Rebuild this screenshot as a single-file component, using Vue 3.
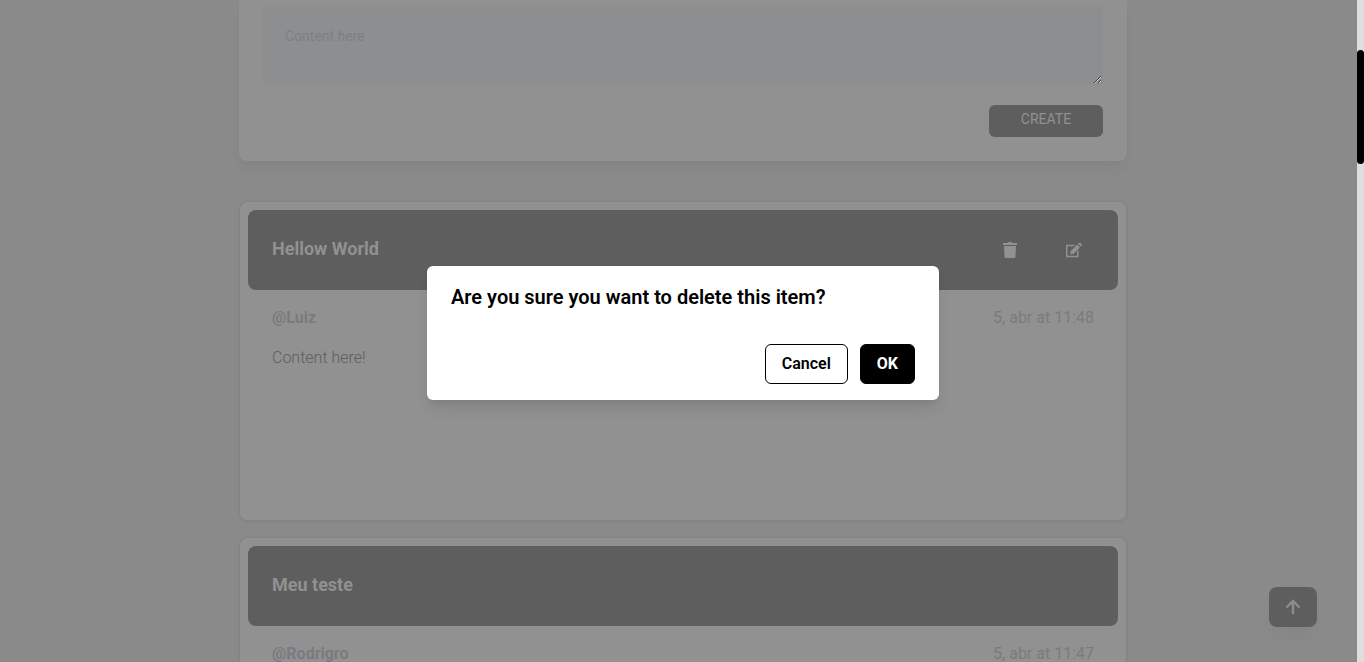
<script setup>
import { ref } from 'vue'

const draft = ref('')
const posts = [
  { id: 1, title: 'Hellow World', author: '@Luiz', date: '5, abr at 11:48', content: 'Content here!', own: true },
  { id: 2, title: 'Meu teste', author: '@Rodrigro', date: '5, abr at 11:47', content: 'Content here!', own: false }
]
</script>

<template>
  <div class="page">
    <main class="feed">
      <form class="composer" @submit.prevent>
        <textarea v-model="draft" class="field" placeholder="Content here" aria-label="Content"></textarea>
        <button class="create" type="submit">CREATE</button>
      </form>

      <section class="posts">
        <article v-for="post in posts" :key="post.id" class="post">
          <header class="post-head">
            <h2>{{ post.title }}</h2>
            <div v-if="post.own" class="actions">
              <button type="button" aria-label="Delete">
                <svg width="20" height="20" viewBox="0 0 20 20" fill="currentColor">
                  <path d="M3 3h4.300l.9-1h3.600l.9 1H17v2H3V3z" />
                  <path d="M4 6h12l-.5 10.700a1.400 1.400 0 0 1-1.400 1.300H5.900a1.400 1.400 0 0 1-1.400-1.300L4 6z" />
                </svg>
              </button>
              <button type="button" aria-label="Edit">
                <svg width="20" height="20" viewBox="0 0 20 20" fill="currentColor">
                  <path d="M2 4.700h9.500L10 6.200H3.500v9.500H13v-4.200l1.500-1.500v7.200H2V4.700z" />
                  <path d="M6.300 14.300l.4-3.200 6.500-6.500 2.800 2.800-6.500 6.500-3.200.4zM14 3.800l.7-.7a1.300 1.300 0 0 1 1.800 0l1 1a1.300 1.300 0 0 1 0 1.800l-.7.7L14 3.800z" />
                </svg>
              </button>
            </div>
          </header>
          <div class="post-body">
            <div class="meta">
              <strong>{{ post.author }}</strong>
              <span>{{ post.date }}</span>
            </div>
            <p>{{ post.content }}</p>
          </div>
        </article>
      </section>
    </main>

    <button class="to-top" type="button" aria-label="Back to top">
      <svg width="24" height="24" viewBox="0 0 24 24" fill="none" stroke="currentColor" stroke-width="2.400">
        <path d="M12 19V6.500M5.500 12.500L12 6l6.500 6.500" />
      </svg>
    </button>

    <div class="layer">
      <div class="dialog" role="alertdialog" aria-modal="true" aria-labelledby="confirm-title">
        <h1 id="confirm-title">Are you sure you want to delete this item?</h1>
        <div class="choices">
          <button class="cancel" type="button">Cancel</button>
          <button class="ok" type="button">OK</button>
        </div>
      </div>
    </div>

    <div class="track"><div class="thumb"></div></div>
  </div>
</template>

<style>
body {
  background: #8a8a8a;
}
</style>

<style scoped>
* {
  box-sizing: border-box;
}

.page {
  position: relative;
  height: 100vh;
  overflow: hidden;
  padding-left: 2px;
  background: #8a8a8a;
  font-family: Roboto, "Liberation Sans", sans-serif;
  font-size: 16px;
  line-height: 24px;
}

button {
  border: 0;
  padding: 0;
  font: inherit;
  cursor: pointer;
}

h1,
h2,
p {
  margin: 0;
}

.feed {
  max-width: 888px;
  margin: 0 auto;
}

.composer {
  display: flex;
  flex-direction: column;
  gap: 20px;
  padding: 5px 24px 24px;
  border-radius: 0 0 8px 8px;
  background: #919191;
  box-shadow: 0 10px 15px -3px rgba(0, 0, 0, 0.04), 0 4px 6px -2px rgba(0, 0, 0, 0.02);
}

.field {
  display: block;
  width: 100%;
  height: 80px;
  padding: 20px 21px;
  border: 1px solid #8d8e90;
  border-radius: 4px;
  outline: 0;
  background: #8d8e90;
  color: #5e5e5e;
  font: inherit;
  font-size: 14px;
  line-height: 21px;
  resize: vertical;
}

.field::placeholder {
  color: #7d7f82;
  opacity: 1;
}

.create {
  align-self: flex-end;
  width: 114px;
  height: 32px;
  padding-bottom: 4px;
  border-radius: 6px;
  background: #5e5e5e;
  color: #919191;
  font-size: 14px;
}

.posts {
  display: grid;
  gap: 16px;
  margin-top: 40px;
}

.post {
  min-height: 320px;
  padding: 8px;
  border: 1px solid #818385;
  border-radius: 8px;
  background: #919191;
  box-shadow: 0 1px 3px rgba(0, 0, 0, 0.04);
}

.post-head {
  display: flex;
  align-items: center;
  justify-content: space-between;
  height: 80px;
  padding: 0 24px;
  border-radius: 8px;
  background: #5e5e5e;
  color: #919191;
}

.post-head h2 {
  padding-bottom: 3px;
  font-size: 18px;
  font-weight: 700;
}

.actions {
  display: flex;
  gap: 24px;
}

.actions button {
  display: grid;
  place-items: center;
  width: 40px;
  height: 40px;
  background: transparent;
  color: #919191;
}

.post-body {
  padding: 16px 24px;
}

.meta {
  display: flex;
  justify-content: space-between;
  margin-bottom: 16px;
  color: #797b7f;
}

.post-body p {
  color: #5e5e5e;
  font-weight: 300;
}

.to-top {
  position: absolute;
  right: 47px;
  bottom: 35px;
  display: grid;
  place-items: center;
  width: 48px;
  height: 40px;
  border-radius: 8px;
  background: #5e5e5e;
  color: #8d8d8d;
  box-shadow: 0 10px 15px -3px rgba(0, 0, 0, 0.04);
}

.layer {
  position: absolute;
  inset: 0;
  display: grid;
  place-items: center;
  padding: 4px 0 0 2px;
}

.dialog {
  width: 512px;
  max-width: 100%;
  padding: 16px 24px;
  border-radius: 6px;
  background: #fff;
  color: #000;
  box-shadow: 0 10px 15px -3px rgba(0, 0, 0, 0.1), 0 4px 6px -2px rgba(0, 0, 0, 0.05);
}

.dialog h1 {
  font-size: 20px;
  font-weight: 600;
  line-height: 30px;
}

.choices {
  display: flex;
  justify-content: flex-end;
  gap: 12px;
  margin-top: 32px;
}

.choices button {
  height: 40px;
  padding: 0 16px;
  border: 1px solid #000;
  border-radius: 6px;
  font-weight: 600;
}

.cancel {
  background: #fff;
  color: #000;
}

.choices .ok {
  background: #000;
  color: #fff;
  font-weight: 700;
}

.track {
  position: absolute;
  top: 0;
  right: 0;
  bottom: 0;
  width: 7px;
  padding-top: 50px;
  background: #dedede;
}

.thumb {
  height: 114px;
  border-radius: 4px;
  background: #000;
}
</style>
